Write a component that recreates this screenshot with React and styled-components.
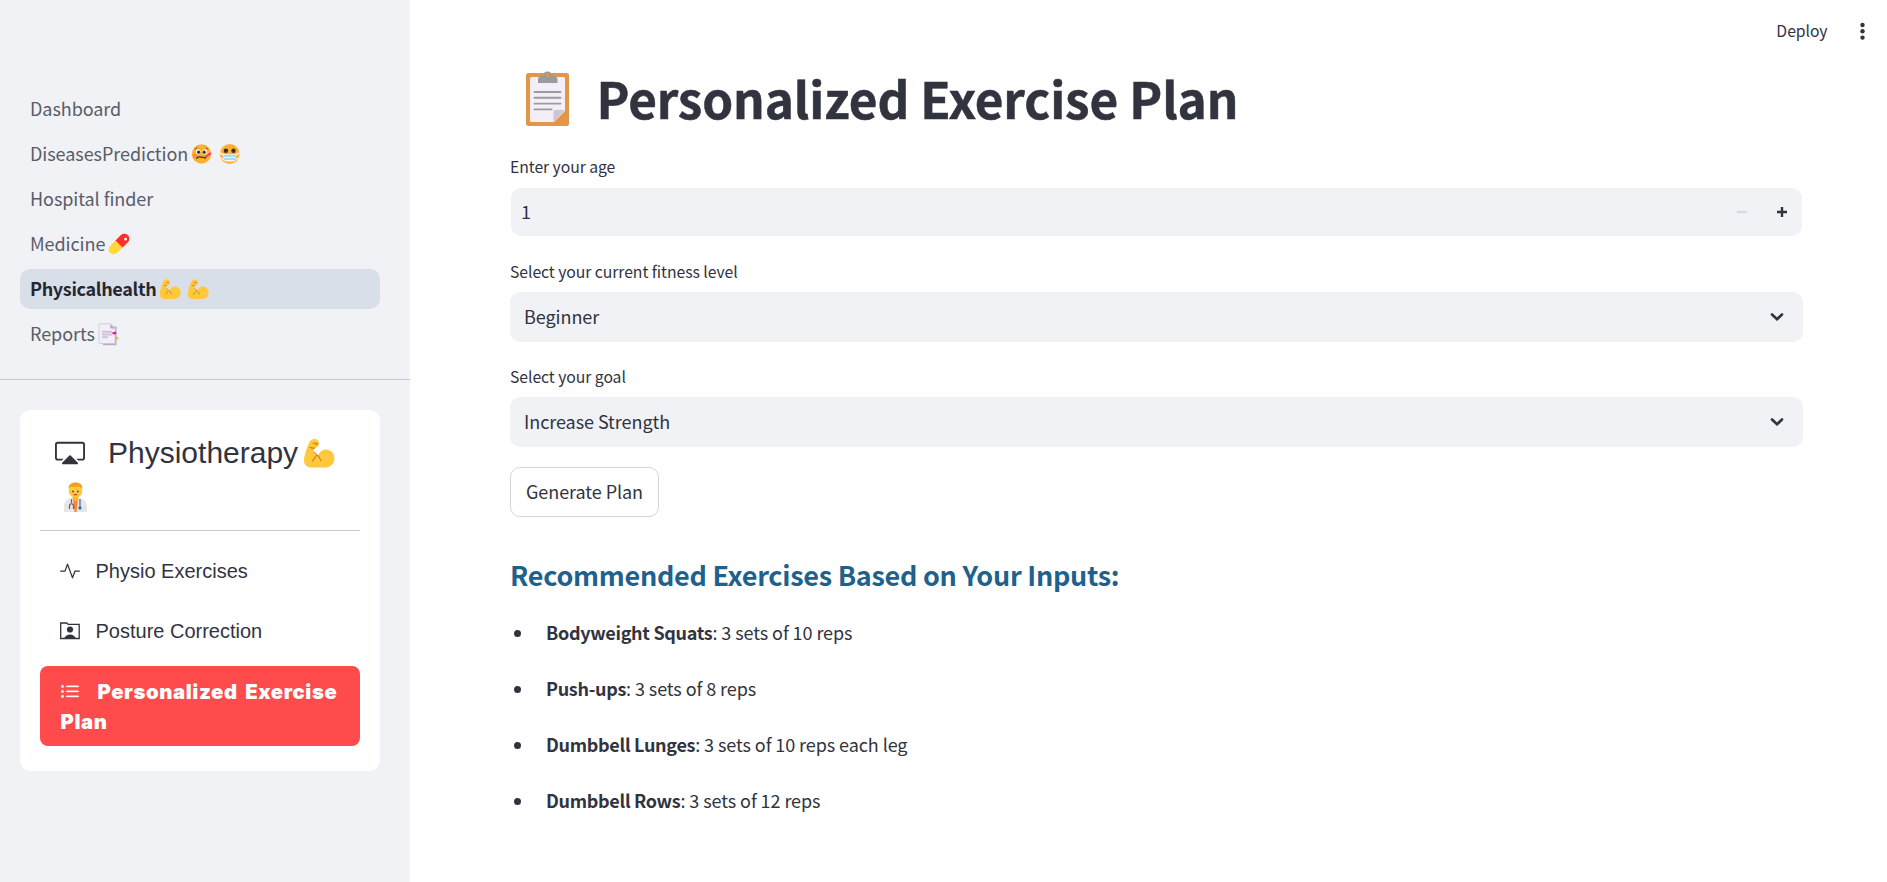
import React from "react";
import styled, { createGlobalStyle } from "styled-components";
import { BsCast, BsActivity, BsListUl } from "react-icons/bs";

const ink = "#31333f";
const sans = '"Noto Sans CJK SC", "Noto Sans", sans-serif';
const arial = '"Liberation Sans", Arial, sans-serif';

const GlobalStyle = createGlobalStyle`
  * { box-sizing: border-box; }
  body { margin: 0; background: #fff; color: ${ink}; font-family: ${sans}; letter-spacing: -0.06px; }
  h1, h2, ul, p { margin: 0; padding: 0; }
`;

const Page = styled.div`
  display: flex;
  width: 100%;
  height: 882px;
  overflow: hidden;
`;

const Sidebar = styled.aside`
  width: 410px;
  flex: none;
  background: #f0f2f6;
`;

const Nav = styled.nav`
  display: flex;
  flex-direction: column;
  gap: 5px;
  padding: 89px 30px 25px 20px;
  border-bottom: 1px solid #c9cbd1;
`;

const NavItem = styled.a`
  display: flex;
  align-items: center;
  height: 40px;
  padding: 0 10px;
  border-radius: 10px;
  font-size: 18px;
  white-space: nowrap;
  color: ${(p) => (p.$active ? "#262730" : "#5a5c69")};
  font-weight: ${(p) => (p.$active ? 700 : 400)};
  letter-spacing: ${(p) => (p.$active ? "-0.33px" : "-0.06px")};
  background: ${(p) => (p.$active ? "#d9dfe9" : "transparent")};
`;

const NavLabel = styled.span`
  line-height: 38px;
  padding-bottom: 2px;
`;

const NavEmoji = styled.span`
  display: inline-flex;
  gap: 5.5px;
  margin-left: 3px;
`;

const MenuCard = styled.section`
  margin: 30px 30px 0 20px;
  height: 361px;
  padding: 20px;
  border-radius: 10px;
  background: #fff;
  font-family: ${arial};
  letter-spacing: 0;
`;

const MenuTitle = styled.div`
  height: 101px;
  padding: 0 15px;
  border-bottom: 1px solid #c8c9cb;
  font-size: 30px;
`;

const TitleRow = styled.div`
  display: flex;
  align-items: center;
  height: 45px;
  line-height: 45px;
  white-space: nowrap;
`;

const TitleText = styled.span`
  margin: 0 5px 0 23px;
`;

const DoctorRow = styled.div`
  display: flex;
  padding: 7px 0 0 8px;
`;

const MenuItems = styled.div`
  padding-top: 10px;
`;

const MenuItem = styled.a`
  display: flex;
  align-items: center;
  gap: 15.5px;
  height: 60px;
  padding: 0 20px;
  font-size: 20px;
  line-height: 30px;
  svg { flex: none; }
`;

const ActiveItem = styled.a`
  display: block;
  height: 80px;
  margin-top: 5px;
  padding: 11px 10px 9px 17px;
  border-radius: 8px;
  background: #ff4b4b;
  color: #fff;
  font-family: Inter, ${arial};
  font-weight: 900;
  font-size: 20.3px;
  line-height: 30px;
  letter-spacing: 0.6px;
  word-spacing: 3px;
  svg { vertical-align: -3px; margin: 0 17.5px 0 3px; stroke: #fff; stroke-width: 0.3; }
`;

const ActiveWrap = styled.span`
  display: block;
  margin-left: 3.5px;
`;

const Main = styled.main`
  flex: 1;
  min-width: 0;
`;

const Toolbar = styled.header`
  display: flex;
  align-items: center;
  justify-content: flex-end;
  height: 62px;
  padding-right: 19px;
  gap: 29.5px;
  font-size: 15.75px;
`;

const Deploy = styled.span`
  padding-bottom: 1px;
`;

const Content = styled.div`
  padding: 0 84px 0 100px;
`;

const Title = styled.h1`
  display: flex;
  align-items: center;
  height: 74px;
  margin-bottom: 19px;
  padding-left: 15px;
  gap: 26.5px;
  font-size: 49.5px;
  line-height: 72px;
  font-weight: 700;
  letter-spacing: -0.12px;
  -webkit-text-stroke: 0.5px ${ink};
  white-space: nowrap;
`;

const TitleLabel = styled.span`
  padding-bottom: 3px;
`;

const Field = styled.div`
  display: flow-root;
  margin-bottom: ${(p) => (p.$last ? 20 : 23)}px;
`;

const Label = styled.label`
  display: block;
  height: 32px;
  font-size: 15.75px;
  line-height: 23px;
`;

const Box = styled.div`
  display: flex;
  align-items: center;
  justify-content: space-between;
  height: 50px;
  padding: 0 19px 0 14px;
  border-radius: 10px;
  background: #f0f2f6;
  font-size: 18px;
`;

const NumberBox = styled(Box)`
  height: 48px;
  margin: 1px;
  padding: 0 15px 0 10px;
`;

const Value = styled.span`
  padding-bottom: 2.5px;
`;

const Steps = styled.span`
  display: flex;
  gap: 30px;
`;

const Generate = styled.button`
  display: block;
  width: 149px;
  height: 50px;
  padding: 0 0 2px;
  border: 1px solid #d6d6d9;
  border-radius: 10px;
  background: #fff;
  color: ${ink};
  font: 400 18px/46px ${sans};
  letter-spacing: -0.06px;
`;

const Heading = styled.h2`
  margin-top: 35px;
  height: 46px;
  font-size: 27px;
  line-height: 46px;
  font-weight: 700;
  letter-spacing: -0.27px;
  color: #1f618d;
  white-space: nowrap;
`;

const List = styled.ul`
  list-style: none;
  padding-top: 7px;
`;

const Item = styled.li`
  display: flex;
  align-items: center;
  height: 56px;
  font-size: 18px;
  letter-spacing: -0.08px;
  &::before {
    content: "";
    width: 7px;
    height: 7px;
    margin: 0 25px 0 4px;
    border-radius: 50%;
    background: ${ink};
  }
`;

const Exercise = styled.span`
  padding-bottom: 2px;
  white-space: pre;
`;

const Strong = styled.b`
  font-weight: 700;
  letter-spacing: -0.3px;
`;

const Fever = () => (
  <svg width="22" height="22" viewBox="0 0 22 22">
    <circle cx="10.5" cy="11" r="9.7" fill="#ffb02e" />
    <circle cx="4" cy="13" r="2.4" fill="#ff8a3c" />
    <circle cx="7.2" cy="9" r="2.4" fill="#fff" /><circle cx="13.6" cy="9" r="2.4" fill="#fff" />
    <circle cx="7.6" cy="9.2" r="1.6" fill="#402a32" /><circle cx="13.2" cy="9.2" r="1.6" fill="#402a32" />
    <path d="M3.8 6.2 6.2 4.5M14.8 4.5l2.4 1.7" stroke="#7d4533" strokeWidth="1" fill="none" />
    <path d="M5.5 15.7c1-2.5 3-1.8 5-1.5s3-.2 4.6 1.2" stroke="#402a32" strokeWidth="1.3" fill="none" />
    <path d="M14.2 14.2 20 10" stroke="#f92f8b" strokeWidth="1.9" />
  </svg>
);

const Mask = () => (
  <svg width="22" height="22" viewBox="0 0 22 22">
    <circle cx="10.7" cy="11" r="9.9" fill="#ffb02e" />
    <path d="M.8 9 5 11.2h11.5L20.6 9v1.7L17 13v2.500l3-1.200-.6 1.500-3 1.700-1.500 1H6.500l-1.300-1L2 15.700l-.6-1.500 3 1.200V13L.8 10.700z" fill="#f3f3f8" />
    <path d="M5 13h12M5 16h12" stroke="#8fd0f5" strokeWidth="1.3" />
    <circle cx="6.9" cy="7.7" r="2.2" fill="#402a32" /><circle cx="14.5" cy="7.7" r="2.2" fill="#402a32" />
  </svg>
);

const Pill = () => (
  <svg width="22" height="22" viewBox="0 0 22 22">
    <g transform="rotate(-45 11 11)">
      <rect x="-1.5" y="6" width="25" height="10" rx="5" fill="#ffd93b" />
      <path d="M11 6h7.5a5 5 0 0 1 0 10H11z" fill="#f8312f" />
    </g>
    <circle cx="17.6" cy="6.2" r="1.4" fill="#fff" />
  </svg>
);

const Arm = ({ size = 22 }) => (
  <svg width={size} height={size} viewBox="0 0 32 32">
    <path d="M6 6C7.5 2.7 10 1.5 12.2 2c3 .6 4.6 3.4 3.6 6-.7 1.9-2.3 2.5-4 3.2-.9.5-1 1.500-.8 2.600l.8 3.600c1.300.1 2.300.5 3.200 1.200C16.500 14.600 19.500 12.500 23 12.500c4.800 0 8.500 3.900 8.500 8.700 0 5.700-4 9.300-10 9.300H8.500C4 30.500 1 28 1 23.500 1 18.500 3.700 11.500 6 6z" fill="#ffc83d" />
    <path d="M6.7 10.3c1.6.9 3.2 1 5.100.8M9.800 6.500c1.500-.9 3.200-.4 4.500.5l-1.800 1.100M9.200 24.500l4.200-6M15.200 18.500l3 5.500M11.300 15l3.300 3.800" stroke="#d67d00" strokeWidth="1.1" fill="none" />
  </svg>
);

const Tabs = () => (
  <svg width="21" height="23" viewBox="0 0 21 23">
    <path d="M5 3.5h13.5v18.700H5z" fill="#b4acbc" />
    <path d="M2 .7h10.500l4.500 4.500v15.300H2a1 1 0 0 1-1-1V1.700a1 1 0 0 1 1-1z" fill="#f3eef8" stroke="#cdc4d6" strokeWidth=".8" />
    <path d="M12.200 1v4.500H17z" fill="#b4acbc" />
    <path d="M4 8.800h10M4 11.500h10M4 14.300h6" stroke="#cdc4d6" strokeWidth="1.9" />
    <path d="M14.500 9h3.700v2.300h-3.700z" fill="#f70a8d" /><path d="M17 14h3.200v2.300H17z" fill="#fcb32b" />
  </svg>
);

const Doctor = () => (
  <svg width="25" height="31" viewBox="0 0 25 31">
    <path d="M1 30v-6c0-4 3-7 7-7.500h9c4 .5 7 3.500 7 7.500v6z" fill="#e6e6e6" />
    <path d="M10 16.500h5l-1.500 13.500h-2z" fill="#ff822d" />
    <path d="M9.500 13h6v4l-3 3-3-3z" fill="#ffb02e" />
    <circle cx="12.500" cy="9" r="6.800" fill="#ffc83d" />
    <path d="M5.700 7C5 3 8 .500 12.500.500S20 3 19.300 7C18 6 17 4.700 16 4.500c-3 .7-7 .7-8 0C7.300 5 6.500 6 5.700 7z" fill="#f59f20" />
    <circle cx="10" cy="9.500" r=".9" fill="#5b4353" /><circle cx="15" cy="9.500" r=".9" fill="#5b4353" />
    <path d="M10.700 12.700h3.600" stroke="#d3343b" strokeWidth="1.2" />
    <path d="M8.500 17v4M6.500 27v-3c0-3 4-3 4 0v3M17 17v9" stroke="#635994" strokeWidth="1.2" fill="none" />
    <circle cx="17" cy="26" r="1.6" fill="#0074ba" />
  </svg>
);

const Clipboard = () => (
  <svg width="45" height="56" viewBox="0 0 45 56">
    <rect x="1" y="2" width="43" height="53" rx="2.5" fill="#e19747" />
    <path d="M6.500 6h32a1.500 1.500 0 0 1 1.500 1.500V40L29 51H6.500A1.500 1.500 0 0 1 5 49.500v-42A1.500 1.500 0 0 1 6.500 6z" fill="#f3eef8" />
    <path d="M28.500 51V40.500a1.500 1.500 0 0 1 1.500-1.500h10z" fill="#cdc4d6" />
    <path d="M13 12V8.500C13 6 15 4.500 18.500 4.500a4 4 0 0 1 8 0C30 4.500 32.500 6 32.500 8.500V12z" fill="#9b9b9b" />
    <circle cx="22.500" cy="4.500" r="2" fill="#e19747" />
    <path d="M9.500 21h26M9.500 26.800h26M9.500 32.600h26M9.500 38.400h17" stroke="#9b9b9b" strokeWidth="1.9" strokeLinecap="round" />
  </svg>
);

const PersonFolder = () => (
  <svg width="20" height="18" viewBox="0 0 20 18">
    <path d="M.7 16.500V1h6l1.500 1.300h11v14.200z" fill="none" stroke={ink} strokeWidth="1.3" />
    <circle cx="10" cy="7.500" r="3.100" fill={ink} />
    <path d="M4 17c1-3 3-4.500 6-4.500s5 1.500 6 4.500z" fill={ink} />
  </svg>
);

const Chevron = () => (
  <svg width="14" height="10" viewBox="0 0 14 10">
    <path d="M2 2.500l5 4.800 5-4.800" fill="none" stroke={ink} strokeWidth="2.6" strokeLinecap="round" />
  </svg>
);

const Minus = () => (
  <svg width="10" height="10" viewBox="0 0 10 10"><path d="M0 5h10" stroke="#d5dae5" strokeWidth="2.4" /></svg>
);
const Plus = () => (
  <svg width="10" height="10" viewBox="0 0 10 10"><path d="M0 5h10M5 0v10" stroke={ink} strokeWidth="2.4" /></svg>
);
const Dots = () => (
  <svg width="11" height="20" viewBox="0 0 11 20" fill={ink}>
    <circle cx="5.5" cy="4" r="2.2" /><circle cx="5.5" cy="10.3" r="2.2" /><circle cx="5.5" cy="16.6" r="2.2" />
  </svg>
);

const pages = [
  { name: "Dashboard" },
  { name: "DiseasesPrediction", emoji: <><Fever /><Mask /></> },
  { name: "Hospital finder" },
  { name: "Medicine", emoji: <Pill /> },
  { name: "Physicalhealth", emoji: <><Arm /><Arm /></>, active: true },
  { name: "Reports", emoji: <Tabs /> },
];

const plan = [
  ["Bodyweight Squats", "3 sets of 10 reps"],
  ["Push-ups", "3 sets of 8 reps"],
  ["Dumbbell Lunges", "3 sets of 10 reps each leg"],
  ["Dumbbell Rows", "3 sets of 12 reps"],
];

export default function App() {
  return (
    <Page>
      <GlobalStyle />
      <Sidebar>
        <Nav>
          {pages.map((p) => (
            <NavItem key={p.name} $active={p.active}>
              <NavLabel>{p.name}</NavLabel>
              {p.emoji && <NavEmoji>{p.emoji}</NavEmoji>}
            </NavItem>
          ))}
        </Nav>
        <MenuCard>
          <MenuTitle>
            <TitleRow>
              <BsCast size={30} />
              <TitleText>Physiotherapy</TitleText>
              <Arm size={32} />
            </TitleRow>
            <DoctorRow><Doctor /></DoctorRow>
          </MenuTitle>
          <MenuItems>
            <MenuItem><BsActivity size={20} />Physio Exercises</MenuItem>
            <MenuItem><PersonFolder />Posture Correction</MenuItem>
            <ActiveItem>
              <BsListUl size={20} />Personalized Exercise <ActiveWrap>Plan</ActiveWrap>
            </ActiveItem>
          </MenuItems>
        </MenuCard>
      </Sidebar>
      <Main>
        <Toolbar><Deploy>Deploy</Deploy><Dots /></Toolbar>
        <Content>
          <Title><Clipboard /><TitleLabel>Personalized Exercise Plan</TitleLabel></Title>
          <Field>
            <Label>Enter your age</Label>
            <NumberBox><Value>1</Value><Steps><Minus /><Plus /></Steps></NumberBox>
          </Field>
          <Field>
            <Label>Select your current fitness level</Label>
            <Box><Value>Beginner</Value><Chevron /></Box>
          </Field>
          <Field $last>
            <Label>Select your goal</Label>
            <Box><Value>Increase Strength</Value><Chevron /></Box>
          </Field>
          <Generate>Generate Plan</Generate>
          <Heading>Recommended Exercises Based on Your Inputs:</Heading>
          <List>
            {plan.map(([name, sets]) => (
              <Item key={name}><Exercise><Strong>{name}</Strong>: {sets}</Exercise></Item>
            ))}
          </List>
        </Content>
      </Main>
    </Page>
  );
}
